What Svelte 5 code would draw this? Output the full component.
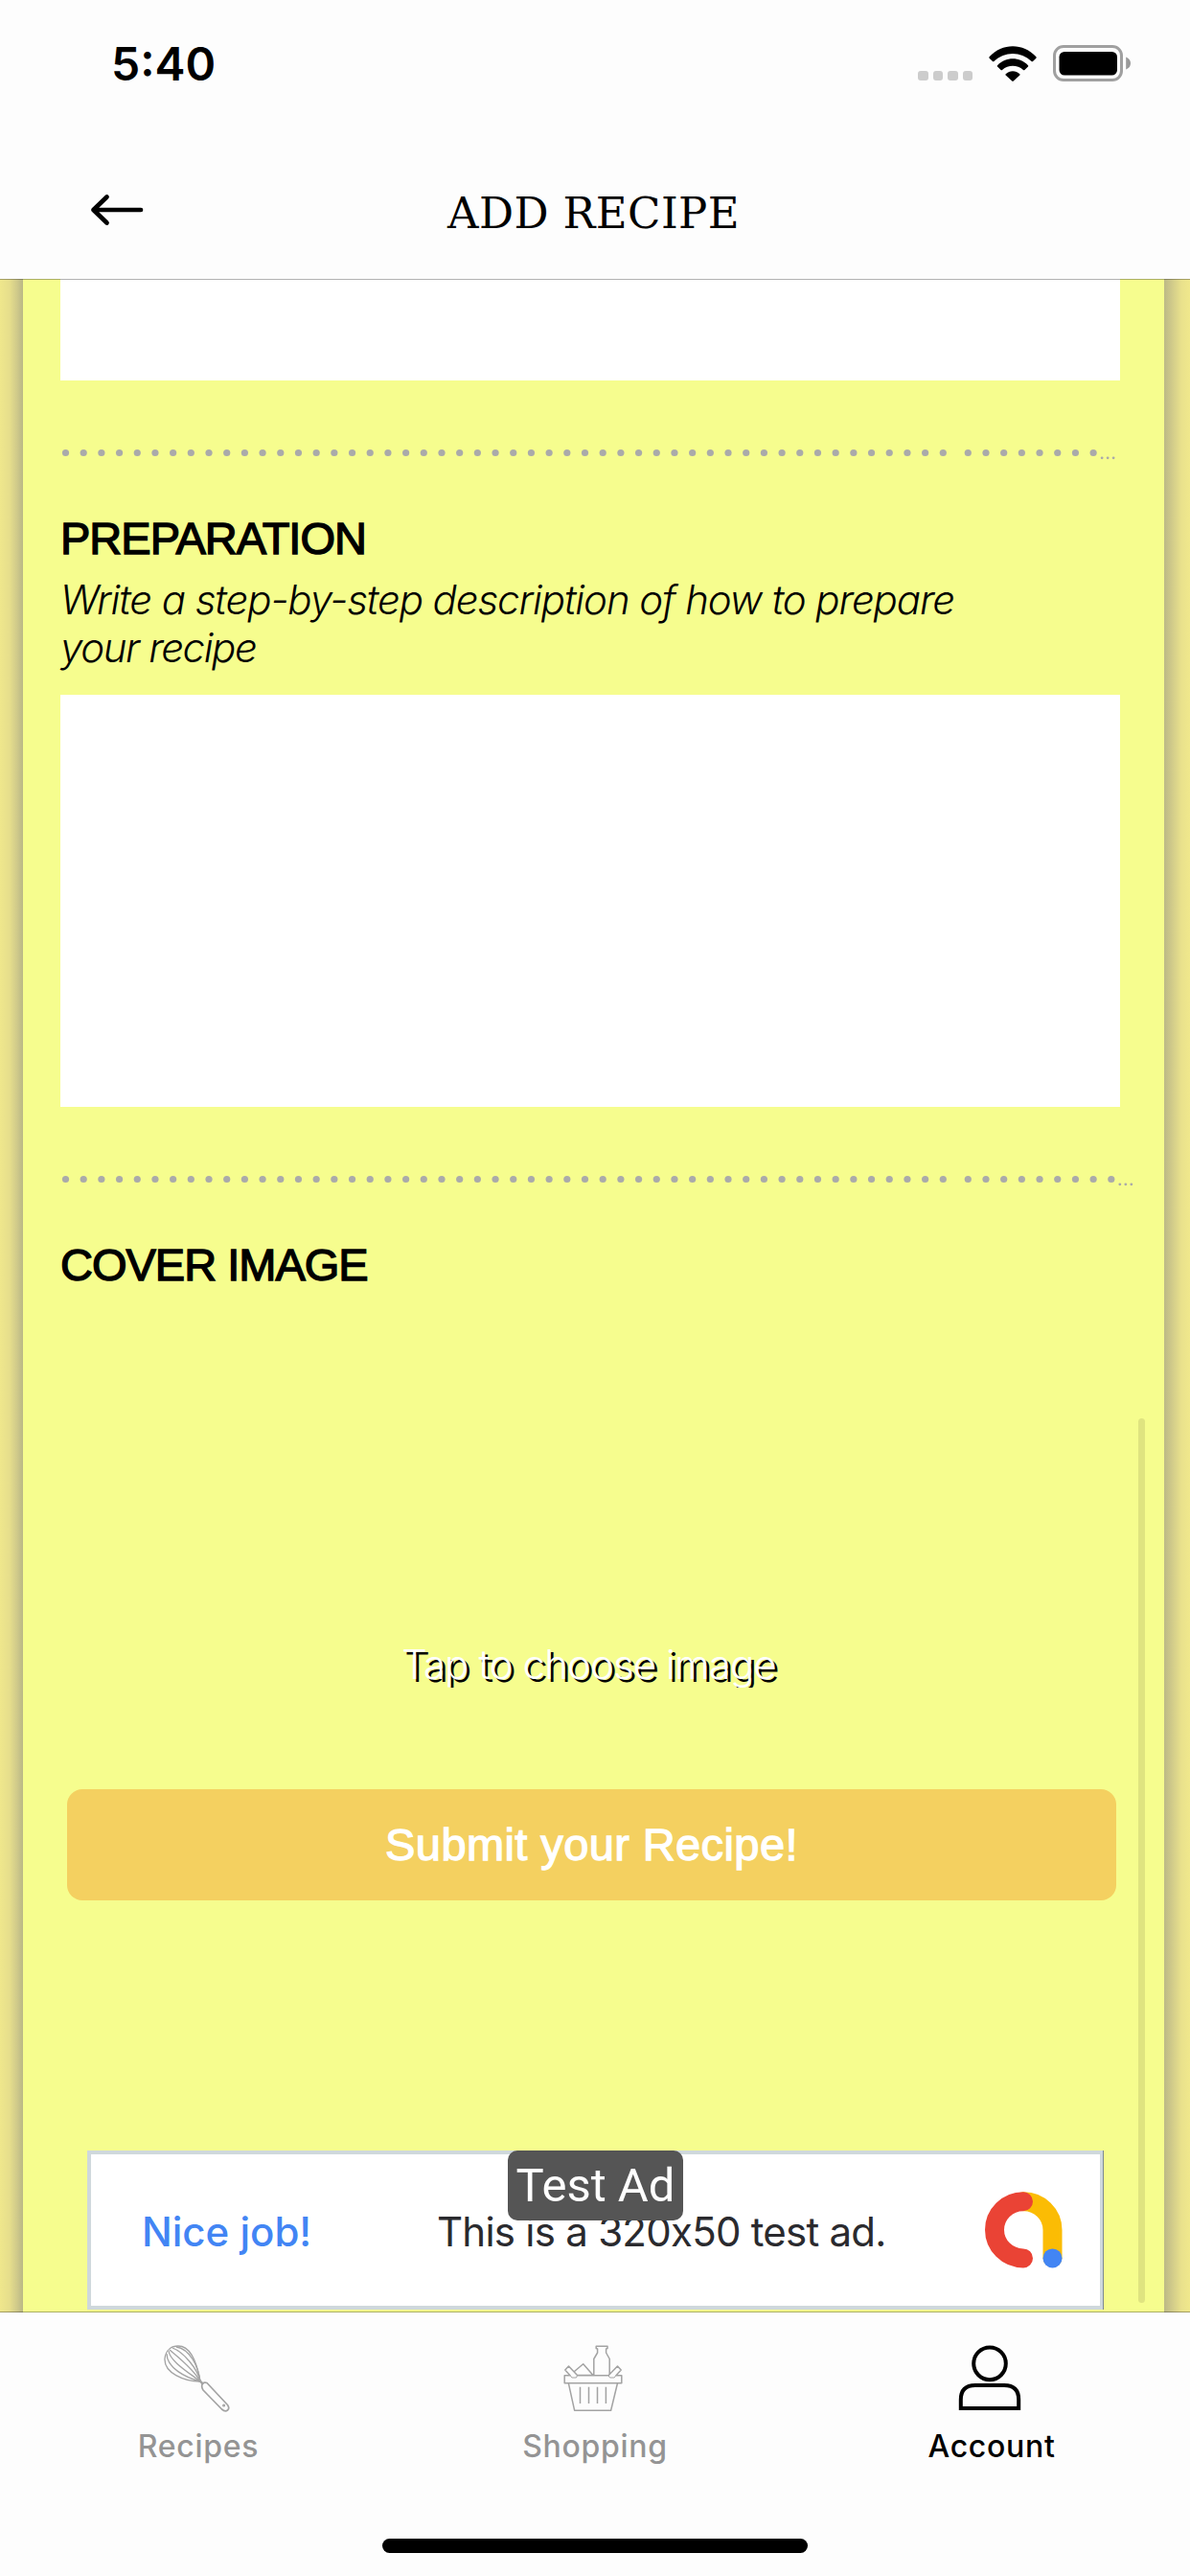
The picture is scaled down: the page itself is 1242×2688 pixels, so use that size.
<script>
  const DOT_GAP = 18.69;
  const dividers = { short: 8, long: 9 };

  // Dotted rule: a run of 50 dots, a wider gap, a second run and a small ellipsis.
  function dotsFor(tail) {
    const first = Array.from({ length: 50 }, (_, i) => 5.5 + i * DOT_GAP);
    const second = Array.from({ length: tail }, (_, i) => 947.3 + i * DOT_GAP);
    return [...first, ...second];
  }

  function ellipsisFor(tail) {
    const start = 947.3 + (tail - 1) * DOT_GAP + 9;
    return [start, start + 6, start + 12];
  }
</script>

{#snippet divider(tail)}
  <svg class="divider" width="1106" height="20" viewBox="0 0 1106 20" aria-hidden="true">
    {#each dotsFor(tail) as x}
      <circle cx={x} cy="10.5" r="3.6" />
    {/each}
    {#each ellipsisFor(tail) as x}
      <circle cx={x} cy="15.8" r="1.4" />
    {/each}
  </svg>
{/snippet}

<div class="screen">
  <header>
    <div class="status">
      <span class="time">5:40</span>
      <div class="signal"><i></i><i></i><i></i><i></i></div>
      <svg class="wifi" width="50" height="37" viewBox="0 0 50 37">
        <path d="M0.6 11.2C14 -3.4 36 -3.4 49.4 11.2Q50 12 49.4 12.7L46 16Q45.3 16.6 44.6 15.9C33.5 5.2 16.5 5.2 5.4 15.9Q4.7 16.6 4 16L0.6 12.7Q0 12 0.6 11.2Z" />
        <path d="M9 20.2C17.6 10.9 32.4 10.9 41 20.2Q41.6 20.9 41 21.6L37.4 25Q36.7 25.6 36 25C29.6 19.4 20.4 19.4 14 25Q13.3 25.6 12.6 25L9 21.6Q8.4 20.9 9 20.2Z" />
        <path d="M17.7 29.2C21.7 25.1 28.3 25.1 32.3 29.2Q32.9 29.9 32.3 30.6L25.8 36.5Q25 37.1 24.2 36.5L17.7 30.6Q17.1 29.9 17.7 29.2Z" />
      </svg>
      <svg class="battery" width="82" height="38" viewBox="0 0 82 38">
        <rect x="1.5" y="1.5" width="70" height="35" rx="9.5" fill="none" stroke="#a0a0a0" stroke-width="3" />
        <rect x="6.5" y="7" width="60.5" height="24.5" rx="5.5" />
        <path d="M76.2 12.5Q81 14.5 81 19T76.2 25.5Z" fill="#999" />
      </svg>
    </div>
    <div class="nav">
      <svg class="back" width="56" height="34" viewBox="0 0 56 34">
        <path d="M3.5 17H53M17.500 3.500L3.500 17L17.500 30.500" />
      </svg>
      <h1>ADD RECIPE</h1>
    </div>
  </header>

  <main>
    <div class="card">
      <div class="field ingredients"></div>
      {@render divider(dividers.short)}
      <h2>PREPARATION</h2>
      <p class="hint">Write a step-by-step description of how to prepare<br /><span>your recipe</span></p>
      <div class="field steps"></div>
      {@render divider(dividers.long)}
      <h2>COVER IMAGE</h2>
      <div class="choose">Tap to choose image</div>
      <button>Submit your Recipe!</button>
      <aside class="ad">
        <span class="nice">Nice job!</span>
        <span class="copy">This is a 320x50 test ad.</span>
        <svg class="logo" width="81" height="80" viewBox="0 0 81 80">
          <path d="M40 10.2A30.2 29.7 0 0 1 70.5 40V69" stroke="#fbbc04" />
          <path d="M40 10.2A30 29.6 0 0 0 40 69.4" stroke="#ea4335" />
          <circle cx="70.5" cy="69.4" r="10" fill="#4285f4" />
        </svg>
        <span class="badge">Test Ad</span>
      </aside>
    </div>
    <div class="scrollbar"></div>
  </main>

  <footer>
    <nav>
      <div class="tab">
        <svg width="69" height="70" viewBox="0 0 69 70">
          <g stroke-width="1.3">
            <path d="M38 38C21 38 0 29 1 14C2 5 8 1 15 1C29 1 35 21 38 38" />
            <path d="M38 38C23 34 3 24 3 9" />
            <path d="M38 38C28 30 6 17 5 6" />
            <path d="M38 38C31 25 14 12 6 5" />
            <path d="M38 38C35 24 20 7 9 3" />
            <path d="M38 38C36 22 27 4 13 2" />
            <path d="M36.5 36L41 41" stroke-width="2.5" />
            <path d="M40 41Q41 38.5 45 39.5L66.5 62.5Q69 66 66.5 68Q64 70 60.5 67L41 47Q39 44 40 41Z" stroke-width="1.7" />
            <circle cx="62.6" cy="63" r="0.9" />
          </g>
        </svg>
        <span>Recipes</span>
      </div>
      <div class="tab">
        <svg width="62" height="70" viewBox="0 0 62 70">
          <g stroke-width="1.5">
            <path d="M11.5 27.5L20.7 19.7L31 31.5H14.5L5.5 22L1.8 26L7 31.7H1.2V39.7H60.8V31.7H55L60.2 26L56.5 22L47 31.7H14.5M31.8 31V14.5L35.6 8V4L34.2 3.5V1.3H46V3.5L44.6 4V8L48.2 14.5V31" />
            <path d="M7 31.7L9 34H13.5L14.5 31.7M55 31.7L53 34H48.5L47 31.7" stroke-width="1" />
            <path d="M5.3 39.7L11.6 68.2H49.6L56.5 39.7" />
            <path d="M17.5 43.7V61M26.5 43.7V61M35.5 43.7V61M44.4 43.7V61" />
          </g>
        </svg>
        <span>Shopping</span>
      </div>
      <div class="tab active">
        <svg width="66" height="70" viewBox="0 0 66 70">
          <g stroke-width="4">
            <ellipse cx="33" cy="19.3" rx="16.8" ry="16.9" />
            <path d="M2.8 66V57Q2.8 42 18 42H48Q63.2 42 63.2 57V66Z" />
          </g>
        </svg>
        <span>Account</span>
      </div>
    </nav>
    <div class="home"></div>
  </footer>
</div>

<style>
  :global(body) { margin: 0; }
  .screen {
    width: 1242px;
    height: 2688px;
    display: flex;
    flex-direction: column;
    overflow: hidden;
    color: #000;
    font-family: Inter, "Liberation Sans", sans-serif;
    white-space: nowrap;
  }
  header, footer {
    position: relative;
    z-index: 1;
    box-sizing: border-box;
    background: #fdfdfd;
    background-clip: padding-box;
  }
  header { height: 292px; border-bottom: 1px solid rgba(0, 0, 0, 0.3); }
  .status {
    display: flex;
    height: 132px;
    box-sizing: border-box;
    padding: 0 61px 0 116px;
    align-items: center;
  }
  .time { font-size: 48px; font-weight: 600; line-height: 60px; margin-right: auto; padding-top: 1px; }
  .signal { display: flex; gap: 5px; margin: 26px 17px 0 0; }
  .signal i { width: 10.5px; height: 10px; border-radius: 3px; background: #ccc; }
  .wifi { margin-right: 17px; }
  .nav { display: grid; grid-template-columns: 467px 1fr; align-items: start; padding-top: 61px; }
  .back { margin: 9px 0 0 94px; fill: none; stroke: #000; stroke-width: 4.7; stroke-linecap: round; stroke-linejoin: round; }
  h1 { margin: 0; font: 400 45px/60px "DejaVu Serif", serif; letter-spacing: 0.4px; }

  main {
    position: relative;
    height: 2122px;
    margin: -1px 0;
    flex: none;
    background:
      linear-gradient(90deg, #efe78c 0, #e6de8c 10px, #cfc98a 18px, #b9b786 24px) 0 0 / 24px 100% no-repeat,
      linear-gradient(270deg, #f0e88c 0, #e9e18c 9px, #d0ca8a 19px, #bcb986 27px) 100% 0 / 27px 100% no-repeat;
  }
  .card {
    height: 100%;
    box-sizing: border-box;
    margin: 0 27px 0 24px;
    padding: 0 46px 0 39px;
    background: #f6fd8e;
    display: flex;
    flex-direction: column;
  }
  .field { background: #fff; flex: none; }
  .ingredients { height: 106px; }
  .steps { height: 430px; margin-top: 24px; }
  .divider { display: block; flex: none; margin-top: 65px; fill: #aaa; overflow: visible; }
  h2 {
    margin: 55px 0 0;
    font: 400 47px/50px "Liberation Sans", Arial, sans-serif;
    letter-spacing: -1px;
    -webkit-text-stroke: 1.4px #000;
  }
  .hint {
    margin: 14px 0 0;
    font-size: 42px;
    line-height: 50px;
    font-style: italic;
    font-weight: 300;
    letter-spacing: -1.1px;
  }
  .hint span { letter-spacing: -1.4px; }
  .choose {
    flex: none;
    height: 50px;
    margin-top: 366px;
    padding-right: 3px;
    overflow: hidden;
    text-align: center;
    font-size: 42px;
    line-height: 51px;
    font-weight: 300;
    letter-spacing: -0.9px;
    color: #fff;
    text-shadow: 3px 3px 0 #000;
  }
  button {
    flex: none;
    height: 116px;
    margin: 106px 4px 0 7px;
    padding: 0;
    border: 0;
    border-radius: 16px;
    background: #f4d060;
    color: #fff;
    font: 400 47px/50px "Liberation Sans", Arial, sans-serif;
    letter-spacing: 0.4px;
    -webkit-text-stroke: 1.3px #fff;
  }
  .ad {
    position: relative;
    flex: none;
    box-sizing: border-box;
    height: 166px;
    margin: 261px 18px 0 28px;
    border: 4px solid #cfd8dc;
    border-right-width: 3px;
    box-shadow: 1px 0 0 #7d8a94;
    background: #fff;
    display: grid;
    grid-template-columns: 362px 571px auto;
    align-items: center;
    line-height: 50px;
  }
  .nice { padding: 4px 0 0 53px; color: #4285f4; font-size: 42px; font-weight: 500; }
  .copy { padding-top: 4px; margin-left: -1px; color: #2a2a2e; font-size: 42px; letter-spacing: -0.75px; }
  .logo { fill: none; stroke-width: 20; stroke-linecap: round; }
  .badge {
    position: absolute;
    left: 435px;
    top: -4px;
    width: 183px;
    height: 73px;
    border-radius: 10px;
    background: #555;
    color: #fff;
    font: 400 49px/73px Roboto, sans-serif;
    text-align: center;
  }
  .scrollbar {
    position: absolute;
    left: 1188px;
    top: 1189px;
    width: 7px;
    height: 923px;
    border-radius: 4px;
    background: #dfe480;
  }

  footer { height: 276px; flex: none; border-top: 1px solid rgba(0, 0, 0, 0.3); }
  nav { display: grid; grid-template-columns: repeat(3, 414px); padding-top: 34px; }
  .tab {
    display: flex;
    flex-direction: column;
    align-items: center;
    color: #949494;
    font-size: 32px;
    font-weight: 500;
    line-height: 40px;
    letter-spacing: 0.7px;
  }
  .tab svg { fill: none; stroke: #a3a3a3; stroke-linejoin: round; margin: 0 4px 16px 0; }
  .tab.active { color: #000; }
  .tab.active svg { stroke: #000; stroke-linejoin: miter; }
  .home { width: 444px; height: 15px; border-radius: 8px; background: #000; margin: 76px auto 0; }
</style>
